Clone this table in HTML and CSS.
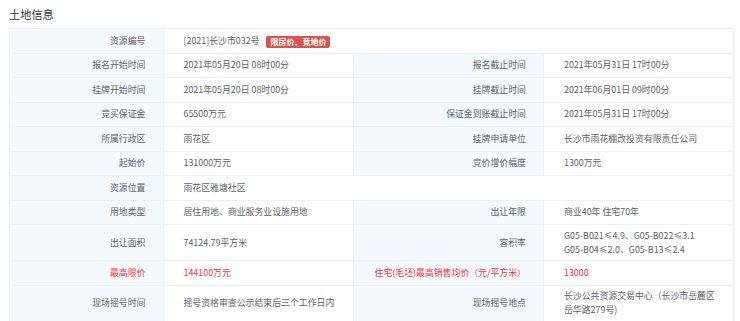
FILE: index.html
```html
<!DOCTYPE html>
<html lang="zh-CN">
<head>
<meta charset="utf-8">
<title>土地信息</title>
<link rel="stylesheet" href="styles.css">
</head>
<body>
<div class="page">
  <h2 class="title">土地信息</h2>
  <table class="info">
    <colgroup>
      <col class="c-label1">
      <col class="c-value">
      <col class="c-label2">
      <col class="c-value">
    </colgroup>
    <tbody>
      <tr>
        <td class="lbl">资源编号</td>
        <td class="val" colspan="3">[2021]长沙市032号<span class="tag">限房价、竞地价</span></td>
      </tr>
      <tr>
        <td class="lbl">报名开始时间</td>
        <td class="val">2021年05月20日 08时00分</td>
        <td class="lbl">报名截止时间</td>
        <td class="val">2021年05月31日 17时00分</td>
      </tr>
      <tr>
        <td class="lbl">挂牌开始时间</td>
        <td class="val">2021年05月20日 08时00分</td>
        <td class="lbl">挂牌截止时间</td>
        <td class="val">2021年06月01日 09时00分</td>
      </tr>
      <tr>
        <td class="lbl">竞买保证金</td>
        <td class="val">65500万元</td>
        <td class="lbl">保证金到账截止时间</td>
        <td class="val">2021年05月31日 17时00分</td>
      </tr>
      <tr>
        <td class="lbl">所属行政区</td>
        <td class="val">雨花区</td>
        <td class="lbl">挂牌申请单位</td>
        <td class="val">长沙市雨花棚改投资有限责任公司</td>
      </tr>
      <tr>
        <td class="lbl">起始价</td>
        <td class="val">131000万元</td>
        <td class="lbl">竞价增价幅度</td>
        <td class="val">1300万元</td>
      </tr>
      <tr>
        <td class="lbl">资源位置</td>
        <td class="val" colspan="3">雨花区雅塘社区</td>
      </tr>
      <tr>
        <td class="lbl">用地类型</td>
        <td class="val">居住用地、商业服务业设施用地</td>
        <td class="lbl">出让年限</td>
        <td class="val">商业40年 住宅70年</td>
      </tr>
      <tr>
        <td class="lbl">出让面积</td>
        <td class="val">74124.79平方米</td>
        <td class="lbl">容积率</td>
        <td class="val">G05-B021≤4.9、G05-B022≤3.1<br>G05-B04≤2.0、G05-B13≤2.4</td>
      </tr>
      <tr class="red">
        <td class="lbl">最高限价</td>
        <td class="val">144100万元</td>
        <td class="lbl">住宅(毛坯)最高销售均价（元/平方米）</td>
        <td class="val">13000</td>
      </tr>
      <tr>
        <td class="lbl">现场摇号时间</td>
        <td class="val">摇号资格审查公示结束后三个工作日内</td>
        <td class="lbl">现场摇号地点</td>
        <td class="val">长沙公共资源交易中心（长沙市岳麓区<br>岳华路279号)</td>
      </tr>
    </tbody>
  </table>
</div>
</body>
</html>
```

FILE: styles.css
```css
html, body {
  margin: 0;
  padding: 0;
  background: #ffffff;
}

body {
  font-family: "Noto Sans CJK SC", "Microsoft YaHei", sans-serif;
  color: #606266;
}

.page {
  padding: 0 7px 0 9px;
}

.title {
  margin: 0;
  padding-top: 6px;
  height: 28px;
  box-sizing: border-box;
  font-size: 11.2px;
  line-height: 16px;
  font-weight: normal;
  color: #303133;
}

.info {
  width: 724px;
  border-collapse: collapse;
  table-layout: fixed;
  font-size: 8.9px;
  line-height: 14px;
}

.c-label1 { width: 153.5px; }
.c-label2 { width: 190.5px; }
.c-value { width: 190px; }

.info td {
  border: 1px solid #edf0f3;
  padding: 3.5px 0;
  height: 16.5px;
  vertical-align: middle;
}

.info .lbl {
  background: #f3f9fd;
  text-align: right;
  padding-right: 17px;
  white-space: nowrap;
}

.info .val {
  background: #ffffff;
  text-align: left;
  padding-left: 20px;
  padding-right: 6px;
}

.info .red td {
  color: #f5353f;
}

.tag {
  display: inline-block;
  margin-left: 7px;
  padding: 0 4px;
  height: 12px;
  line-height: 12px;
  font-size: 8px;
  font-weight: bold;
  color: #ffffff;
  background: #d9534f;
  border-radius: 2px;
  vertical-align: -1px;
}
```
